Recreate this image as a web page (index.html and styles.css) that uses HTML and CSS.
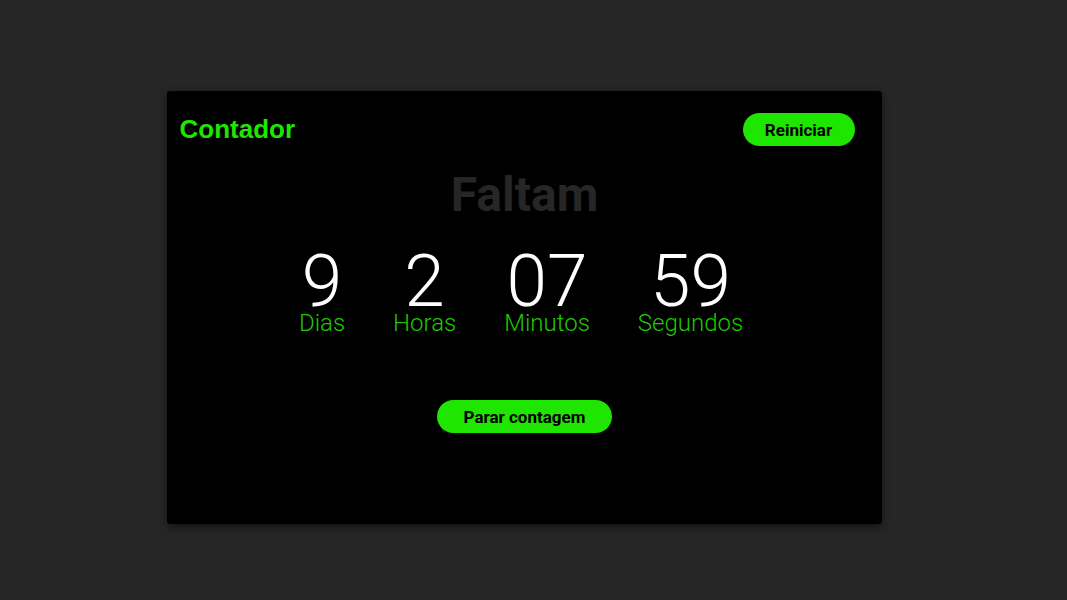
FILE: index.html
```html
<!DOCTYPE html>
<html lang="pt">
<head>
<meta charset="utf-8">
<link rel="stylesheet" href="styles.css">
</head>
<body>
<main class="card">
  <header class="card-header">
    <h1 class="title">Contador</h1>
    <button class="btn btn-reset">Reiniciar</button>
  </header>
  <h2 class="subtitle">Faltam</h2>
  <section class="timer">
    <div class="unit"><span class="num">9</span><span class="label">Dias</span></div>
    <div class="unit"><span class="num">2</span><span class="label">Horas</span></div>
    <div class="unit"><span class="num">07</span><span class="label">Minutos</span></div>
    <div class="unit"><span class="num">59</span><span class="label">Segundos</span></div>
  </section>
  <div class="actions">
    <button class="btn btn-stop">Parar contagem</button>
  </div>
</main>
</body>
</html>
```

FILE: styles.css
```css
html, body {
  margin: 0;
  padding: 0;
  height: 100%;
}
body {
  background: #262626;
  font-family: Roboto, "Liberation Sans", sans-serif;
  display: flex;
  justify-content: center;
  align-items: flex-start;
  padding-top: 91px;
  box-sizing: border-box;
}
.card {
  width: 715px;
  height: 433px;
  background: #000;
  border-radius: 3px;
  box-shadow: 0 3px 8px rgba(0,0,0,0.5);
  box-sizing: border-box;
  padding: 22px 27px 0 13px;
  margin: 0 19px 0 0;
}
.card-header {
  display: flex;
  justify-content: space-between;
  align-items: center;
}
.title {
  margin: 0;
  font-family: "Liberation Sans", Arial, sans-serif;
  font-weight: bold;
  font-size: 26px;
  color: #1fe600;
}
.btn {
  background: #1fe600;
  color: #000;
  border: none;
  border-radius: 17px;
  font-family: Roboto, sans-serif;
  font-weight: bold;
  font-size: 17px;
  height: 33px;
  padding: 0;
  cursor: pointer;
}
.btn-reset {
  width: 112px;
}
.subtitle {
  margin: 21px 0 0 15px;
  text-align: center;
  font-size: 48px;
  font-weight: bold;
  color: #262626;
  line-height: 56px;
}
.timer {
  display: flex;
  justify-content: center;
  gap: 48px;
  margin: 30px 0 0 8px;
}
.unit {
  display: flex;
  flex-direction: column;
  align-items: center;
}
.num {
  font-size: 73px;
  font-weight: 300;
  color: #fff;
  line-height: 56px;
}
.label {
  font-size: 24px;
  font-weight: 300;
  color: #1fc700;
  line-height: 28px;
}
.actions {
  display: flex;
  justify-content: center;
  margin: 63px 0 0 15px;
}
.btn-stop {
  width: 175px;
}
```
